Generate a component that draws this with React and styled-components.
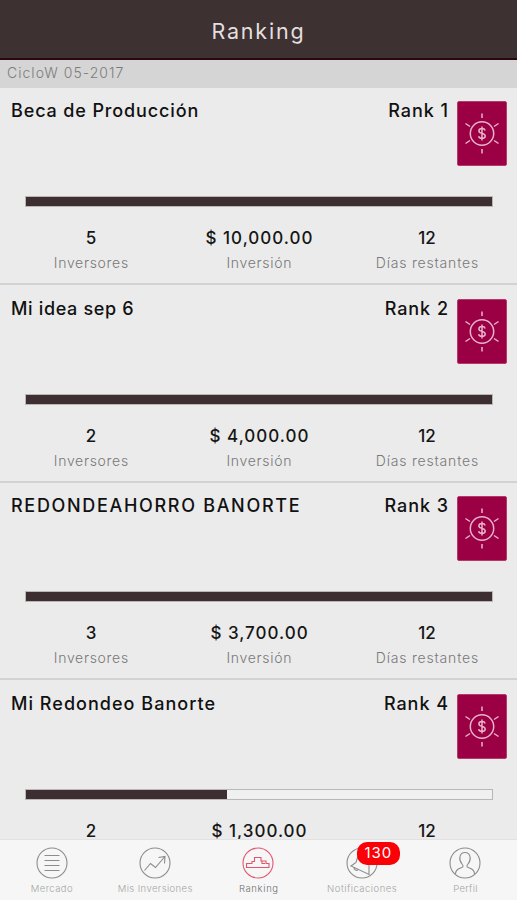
import React from 'react'
import styled, { createGlobalStyle } from 'styled-components'

const GlobalStyle = createGlobalStyle`
  * {
    box-sizing: border-box;
  }

  body {
    margin: 0;
    background: #ebebeb;
    font-family: Inter, 'Liberation Sans', sans-serif;
  }
`

const Screen = styled.div`
  display: flex;
  flex-direction: column;
  height: 900px;
  overflow: hidden;
`

const Header = styled.header`
  display: flex;
  flex: none;
  align-items: center;
  justify-content: center;
  height: 60px;
  padding: 4px 2px 0 0;
  background: #3d3132;
  border-bottom: 2px solid #2b0710;
`

const Title = styled.h1`
  margin: 0;
  color: #e4dfdf;
  font-size: 21.5px;
  font-weight: 400;
`

const Cycle = styled.div`
  flex: none;
  height: 28px;
  padding-left: 7px;
  background: #d5d5d5;
  color: #7c7c7c;
  font-size: 14px;
  font-weight: 300;
  line-height: 26px;
`

const List = styled.main`
  flex: 1;
  min-height: 0;
  overflow: hidden;
`

const Item = styled.section`
  height: 197px;
  margin-bottom: 0.5px;
  border-bottom: 2px solid #d2d2d2;
`

const ItemTop = styled.div`
  display: flex;
  height: 108px;
  padding: 13px 10px 0 11px;
`

const Heading = styled.div`
  display: flex;
  flex: 1;
  justify-content: space-between;
  margin-right: 9px;
  color: #111;
  font-size: 18px;
  font-weight: 500;
  line-height: 20px;
  white-space: nowrap;
`

const Text = styled.span`
  letter-spacing: ${props => props.$tracking || 0}px;
  margin-right: ${props => -(props.$tracking || 0)}px;
`

const Badge = styled.div`
  width: 50px;
  height: 65px;
  background: #9b0044;
  border: 1px solid #b53a68;
  border-radius: 2px;

  svg {
    display: block;
  }
`

const Track = styled.div`
  height: 11px;
  margin: 0 24px 0 25px;
  background: #f0f0f0;
  border: 1px solid #b9b6b6;
`

const Fill = styled.div`
  height: 100%;
  background: #3d2e32;
`

const Stats = styled.div`
  display: grid;
  grid-template-columns: repeat(3, 168px);
  padding: 20px 0 0 7px;
  text-align: center;
`

const Value = styled.div`
  color: #161616;
  font-size: 17px;
  font-weight: 500;
  line-height: 22px;
`

const Label = styled.div`
  margin-top: 4px;
  color: #787878;
  font-size: 14px;
  font-weight: 300;
  line-height: 20px;
`

const TabBar = styled.nav`
  display: grid;
  flex: none;
  grid-template-columns: repeat(5, 1fr);
  height: 61px;
  background: #f6f6f6;
  border-top: 1px solid #e2e2e2;
`

const Tab = styled.div`
  display: flex;
  flex-direction: column;
  align-items: center;
  color: ${props => (props.$active ? '#707070' : '#a5a5a5')};
  font-size: 9.5px;
  font-weight: 300;
  line-height: 12px;
  padding-top: 7px;
  white-space: nowrap;
`

const TabIcon = styled.div`
  position: relative;
  height: 32px;
  margin-bottom: 4px;
  color: ${props => (props.$active ? '#e0566f' : '#8c8c8c')};

  svg {
    display: block;
  }
`

const Count = styled.span`
  position: absolute;
  top: -5px;
  left: 11px;
  width: 43px;
  height: 23px;
  border-radius: 10px;
  background: #fb0007;
  color: #fff;
  font-size: 15px;
  font-weight: 400;
  letter-spacing: 1px;
  line-height: 22px;
  text-align: center;
`

const CoinIcon = () => (
  <svg width="48" height="63" viewBox="0 0 48 63" fill="none" stroke="#e8b4cb" strokeWidth="1.5">
    <circle cx="24" cy="31.5" r="11.7" />
    <path d="M24 11.500v4.500M24 47v4.500M7.500 21.500l4.500 3M40.500 21.500l-4.500 3M7.500 41.500l4.500-3M40.500 41.500l-4.500-3" />
    <path d="M27.2 28.4c-.4-1.2-1.6-1.8-3.2-1.8-1.9 0-3.1.9-3.1 2.3 0 3.3 6.3 1.6 6.3 5 0 1.5-1.3 2.4-3.2 2.4-1.8 0-3-.8-3.4-2.1M24 24.4v14" />
  </svg>
)

const icons = {
  market: <path d="M8.500 8.500h15M8.500 13.500h15M8.500 18.500h15M8.500 23.500h15" />,
  trend: <path d="M5.500 23.500l6-7 5 4 9-10.500M19.500 10.500l6.500-1-.5 7" />,
  podium: <path d="M4.500 20.500v-4h5.500v-2h2.500v-4h6.500v3.500h5v2.500h3v4zM20 14v2.500h3" />,
  bell: <path d="M12 9l-2 6.500-5 3.500 18 8.500v-12M8 20.500c0 2 2 3.500 4 2.500" />,
  profile: (
    <path d="M6.500 27c0-4 2-5 5-6 2.500-.8 3.500-1.500 1.500-4-3.500-4-3-11.500 3-11.500s6.500 7.500 3 11.500c-2 2.500-1 3.200 1.500 4 3 1 5 2 5 6" />
  ),
}

const RoundIcon = ({ name }) => (
  <svg width="32" height="32" viewBox="0 0 32 32" fill="none" stroke="currentColor" strokeWidth="1.1">
    <circle cx="16" cy="16" r="15" />
    {icons[name]}
  </svg>
)

const projects = [
  { name: 'Beca de Producción', tracking: 0.87, investors: 5, amount: '$ 10,000.00', days: 12, progress: 100 },
  { name: 'Mi idea sep 6', tracking: 0.65, investors: 2, amount: '$ 4,000.00', days: 12, progress: 100 },
  { name: 'REDONDEAHORRO BANORTE', tracking: 1.68, investors: 3, amount: '$ 3,700.00', days: 12, progress: 100 },
  { name: 'Mi Redondeo Banorte', tracking: 1.03, investors: 2, amount: '$ 1,300.00', days: 12, progress: 43.2 },
]

const tabs = [
  { label: 'Mercado', icon: 'market', tracking: 0.4 },
  { label: 'Mis Inversiones', icon: 'trend', tracking: 0.4 },
  { label: 'Ranking', icon: 'podium', tracking: 0.65, active: true },
  { label: 'Notificaciones', icon: 'bell', tracking: 0.5, count: 130 },
  { label: 'Perfil', icon: 'profile', tracking: 0.3 },
]

const Project = ({ project, rank }) => (
  <Item>
    <ItemTop>
      <Heading>
        <Text $tracking={project.tracking}>{project.name}</Text>
        <Text $tracking={0.95}>Rank {rank}</Text>
      </Heading>
      <Badge>
        <CoinIcon />
      </Badge>
    </ItemTop>
    <Track>
      <Fill style={{ width: `${project.progress}%` }} />
    </Track>
    <Stats>
      <div>
        <Value>{project.investors}</Value>
        <Label><Text $tracking={0.7}>Inversores</Text></Label>
      </div>
      <div>
        <Value><Text $tracking={1}>{project.amount}</Text></Value>
        <Label><Text $tracking={0.7}>Inversión</Text></Label>
      </div>
      <div>
        <Value>{project.days}</Value>
        <Label><Text $tracking={0.8}>Días restantes</Text></Label>
      </div>
    </Stats>
  </Item>
)

const App = () => (
  <>
    <GlobalStyle />
    <Screen>
      <Header>
        <Title><Text $tracking={1.8}>Ranking</Text></Title>
      </Header>
      <Cycle><Text $tracking={1.02}>CicloW 05-2017</Text></Cycle>
      <List>
        {projects.map((project, i) => (
          <Project key={project.name} project={project} rank={i + 1} />
        ))}
      </List>
      <TabBar>
        {tabs.map(tab => (
          <Tab key={tab.label} $active={tab.active}>
            <TabIcon $active={tab.active}>
              <RoundIcon name={tab.icon} />
              {tab.count && <Count>{tab.count}</Count>}
            </TabIcon>
            <Text $tracking={tab.tracking}>{tab.label}</Text>
          </Tab>
        ))}
      </TabBar>
    </Screen>
  </>
)

export default App
